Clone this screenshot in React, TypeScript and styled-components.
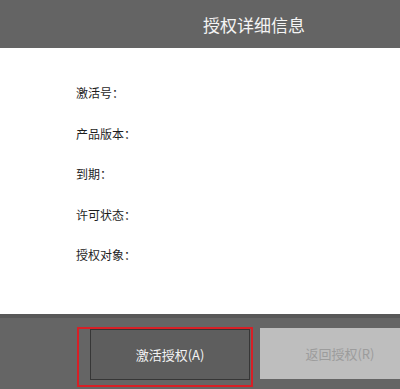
import React from "react";
import styled, { createGlobalStyle } from "styled-components";

const Global = createGlobalStyle`
  html, body { margin: 0; padding: 0; background: #ffffff; }
  body { width: 400px; height: 389px; overflow: hidden; font-family: "Noto Sans CJK SC", "Noto Sans", sans-serif; }
`;

const Page = styled.div`
  width: 400px;
  height: 389px;
  display: flex;
  flex-direction: column;
  overflow: hidden;
`;

const Header = styled.header`
  height: 48px;
  flex: none;
  background: #646464;
  color: #f4f4f4;
  display: flex;
  align-items: center;
  justify-content: center;
  padding-left: 108px;
  font-size: 17px;
`;

const Body = styled.main`
  height: 266px;
  flex: none;
  box-sizing: border-box;
  background: #ffffff;
  padding: 35px 0 0 76px;
  display: flex;
  flex-direction: column;
`;

const Row = styled.div`
  height: 40.5px;
  flex: none;
  line-height: 20px;
  font-size: 12px;
  color: #1e1e1e;
`;

const Footer = styled.footer`
  flex: 1;
  background: #656565;
  border-top: 4px solid #585858;
  display: flex;
  align-items: flex-start;
  padding: 10px 0 0 77px;
  gap: 7px;
`;

const Highlight = styled.div`
  border: 2px solid #d81f26;
  padding: 0 1px 5px 11px;
  display: flex;
  margin-top: -1px;
`;

const Button = styled.button<{ $disabled?: boolean }>`
  flex: none;
  width: 160px;
  height: 51px;
  margin: 0;
  font-family: "Noto Sans CJK SC", "Noto Sans", sans-serif;
  font-size: 13px;
  display: flex;
  align-items: center;
  justify-content: center;
  cursor: pointer;
  background: ${(p) => (p.$disabled ? "#bebebe" : "#5e5e5e")};
  color: ${(p) => (p.$disabled ? "#9c9c9c" : "#f2f2f2")};
  border: 1px solid ${(p) => (p.$disabled ? "#bebebe" : "#363636")};
  padding: 0;
`;

const labels = ["激活号：", "产品版本：", "到期：", "许可状态：", "授权对象："];

export default function App() {
  return (
    <Page>
      <Global />
      <Header>授权详细信息</Header>
      <Body>
        {labels.map((l) => (
          <Row key={l}>{l}</Row>
        ))}
      </Body>
      <Footer>
        <Highlight>
          <Button>激活授权(A)</Button>
        </Highlight>
        <Button $disabled>返回授权(R)</Button>
      </Footer>
    </Page>
  );
}
